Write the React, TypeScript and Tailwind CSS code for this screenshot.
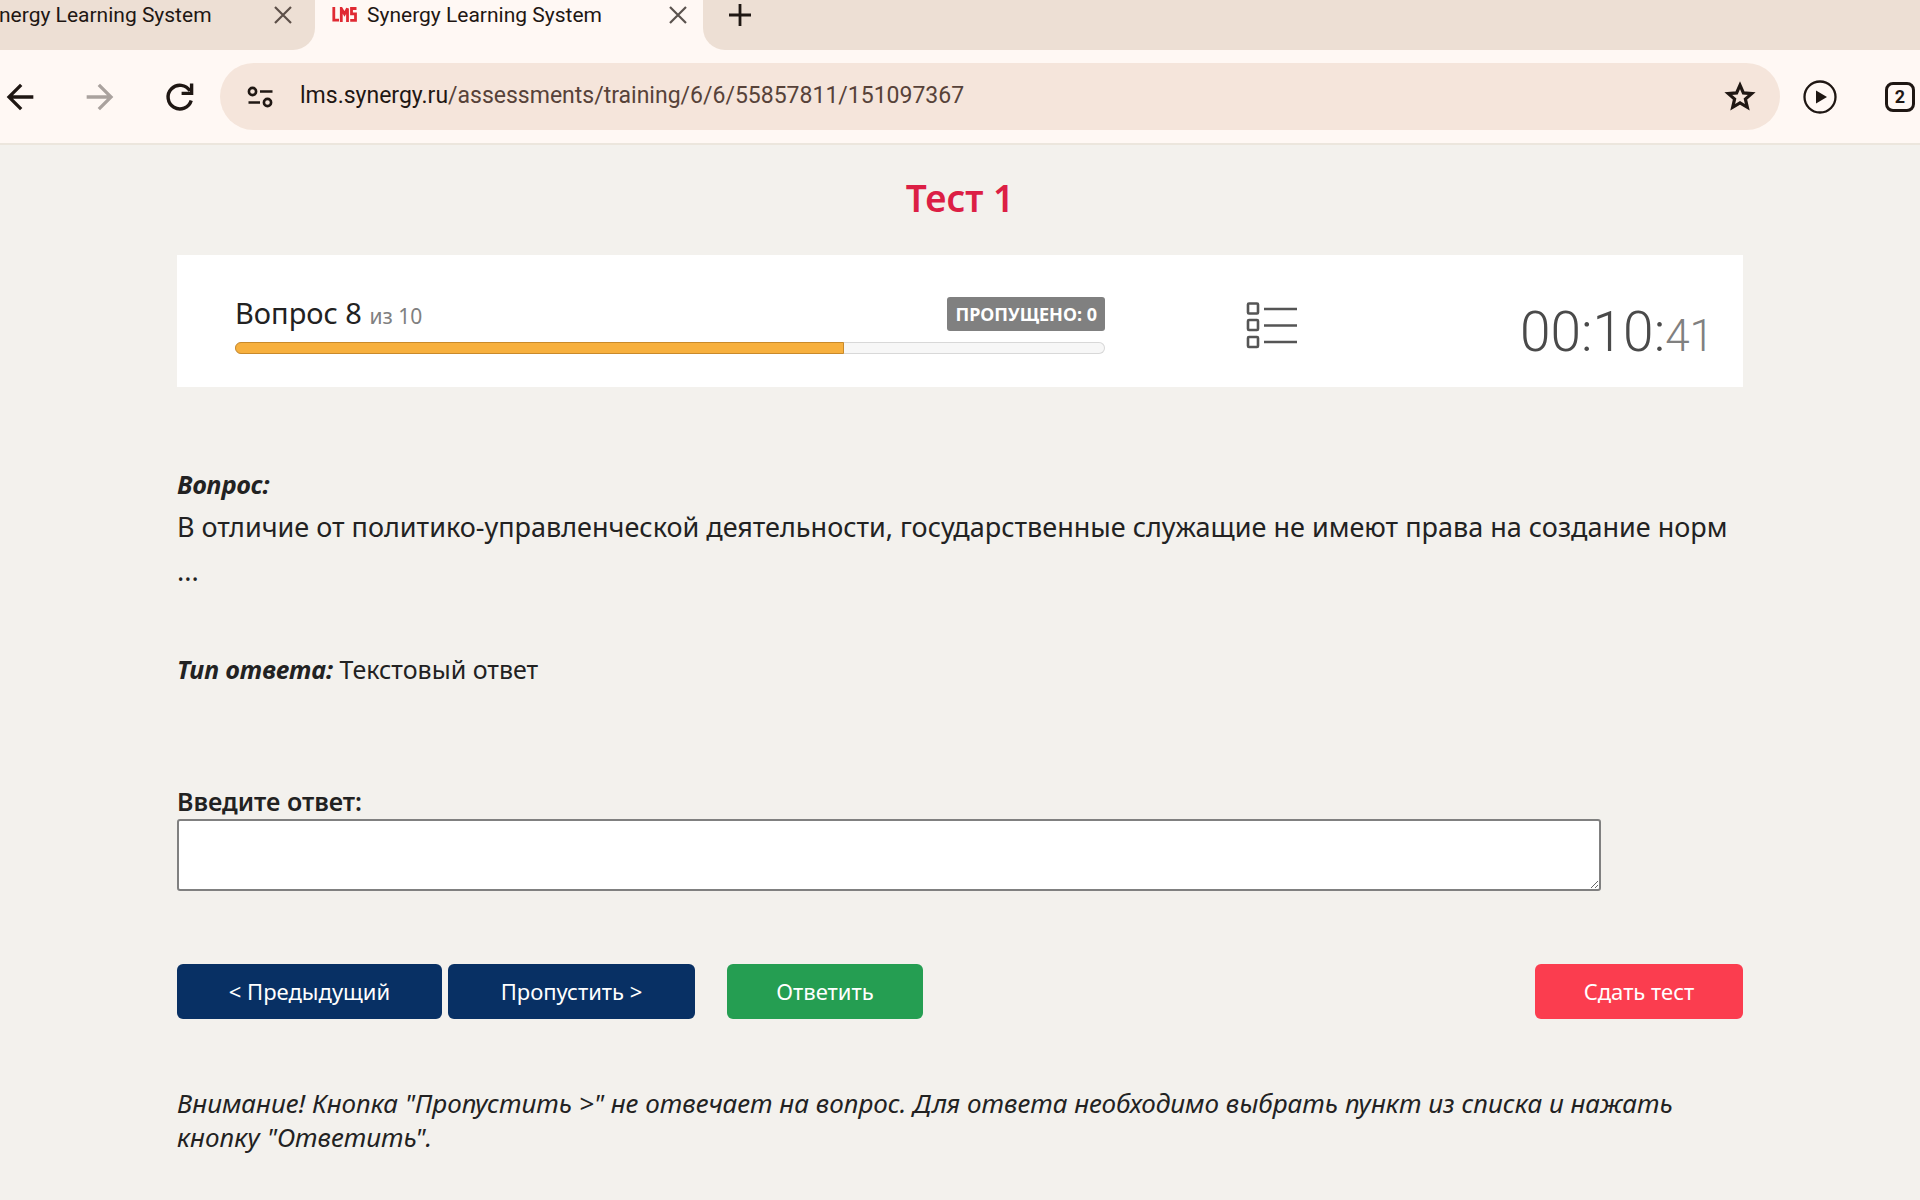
import type { ReactNode } from 'react'

const QUESTION_NUMBER = 8
const QUESTION_COUNT = 10
const ANSWERED = 7

function BackIcon() {
  return (
    <svg viewBox="0 0 24 24" className="size-10" fill="currentColor" aria-hidden="true">
      <path d="M20 11H7.83l5.59-5.59L12 4l-8 8 8 8 1.41-1.41L7.83 13H20z" />
    </svg>
  )
}

function ForwardIcon() {
  return (
    <svg viewBox="0 0 24 24" className="size-10" fill="currentColor" aria-hidden="true">
      <path d="M4 11h12.17l-5.59-5.59L12 4l8 8-8 8-1.41-1.41L16.17 13H4z" />
    </svg>
  )
}

function ReloadIcon() {
  return (
    <svg viewBox="0 0 40 40" className="size-10" fill="none" stroke="currentColor" strokeWidth="3.4" aria-hidden="true">
      <path d="M31.2 23.4A11.8 11.8 0 1 1 30 14" />
      <path d="M31.6 6.4V16.4H21.6" />
    </svg>
  )
}

function SiteSettingsIcon() {
  return (
    <svg viewBox="0 0 28 24" className="h-6 w-7" fill="none" stroke="currentColor" strokeWidth="2.6" aria-hidden="true">
      <circle cx="6.5" cy="6.5" r="3.6" />
      <path d="M14 6.5h12.5M2.5 17.5H14" />
      <circle cx="21.5" cy="17.5" r="3.6" />
    </svg>
  )
}

function StarIcon() {
  return (
    <svg viewBox="0 0 36 36" className="size-9" fill="none" stroke="currentColor" strokeWidth="3.2" aria-hidden="true">
      <path d="M18 6.2l3.4 7.7 8.3.7-6.3 5.5 1.9 8.2-7.3-4.4-7.3 4.4 1.9-8.2-6.3-5.5 8.3-.7z" />
    </svg>
  )
}

function PlayIcon() {
  return (
    <svg viewBox="0 0 36 36" className="size-9" aria-hidden="true">
      <circle cx="18" cy="18" r="15.5" fill="none" stroke="currentColor" strokeWidth="2.3" />
      <path d="M14 11.5L25 18L14 24.5z" fill="currentColor" />
    </svg>
  )
}

function CloseIcon() {
  return (
    <svg viewBox="0 0 18 18" className="size-[18px]" fill="none" stroke="currentColor" strokeWidth="2.2" aria-hidden="true">
      <path d="M1 1l16 16M17 1L1 17" />
    </svg>
  )
}

function PlusIcon() {
  return (
    <svg viewBox="0 0 24 24" className="size-6" fill="none" stroke="currentColor" strokeWidth="2.8" aria-hidden="true">
      <path d="M12 1v22M1 12h22" />
    </svg>
  )
}

// Pixel-style favicon
function LmsLogo() {
  return (
    <svg viewBox="0 0 25 15" className="h-[15px] w-[25px]" fill="none" stroke="#e02a33" strokeWidth="2.8" aria-hidden="true">
      <path d="M1.8 0v13.2H7M9.3 15V1.5L12.5 7l3-5.5V15M24.5 1.5h-5v5.3h4v6.5h-5.3" />
    </svg>
  )
}

function ListIcon() {
  return (
    <svg viewBox="0 0 52 48" className="h-12 w-[52px]" fill="none" stroke="#555" strokeWidth="2.6" aria-hidden="true">
      <rect x="2" y="2.5" width="10" height="10" rx="1" />
      <rect x="2" y="19" width="10" height="10" rx="1" />
      <rect x="2" y="36" width="10" height="10" rx="1" />
      <path d="M18 8h33M18 24.5h33M18 41h33" />
    </svg>
  )
}

function ActionButton({ className, children }: { className: string; children: ReactNode }) {
  return (
    <button type="button" className={`h-[55px] rounded-md text-[22px] text-white ${className}`}>
      {children}
    </button>
  )
}

function BrowserBar() {
  return (
    <header className="bg-[#fff8f4] font-['Roboto',sans-serif] text-[#1f1713]">
      <div className="flex h-[50px] text-[21px] leading-[30px]">
        <div className="flex w-[315px] shrink-0 items-start justify-between rounded-br-[22px] bg-[#eddfd4] pr-[23px]">
          {/* start of the title is scrolled out of view */}
          <span className="-ml-px whitespace-nowrap">nergy Learning System</span>
          <button type="button" aria-label="Закрыть вкладку" className="flex h-[30px] items-center text-[#5d4f48]">
            <CloseIcon />
          </button>
        </div>
        <div className="flex w-[388px] shrink-0 items-start pr-4 pl-[17px]">
          <span className="flex h-[29px] items-center">
            <LmsLogo />
          </span>
          <span className="ml-[10px] whitespace-nowrap">Synergy Learning System</span>
          <button type="button" aria-label="Закрыть вкладку" className="ml-auto flex h-[30px] items-center text-[#5a524e]">
            <CloseIcon />
          </button>
        </div>
        <div className="flex flex-1 items-start rounded-bl-[22px] bg-[#eddfd4] pl-[25px]">
          <button type="button" aria-label="Новая вкладка" className="flex h-[30px] items-center">
            <PlusIcon />
          </button>
        </div>
      </div>

      <div className="flex h-[95px] items-center border-b-2 border-[#ece6dd]">
        <button type="button" aria-label="Назад">
          <BackIcon />
        </button>
        <button type="button" aria-label="Вперёд" className="ml-10 text-[#aaa29e]">
          <ForwardIcon />
        </button>
        <button type="button" aria-label="Обновить" className="ml-10">
          <ReloadIcon />
        </button>
        <div className="ml-5 flex h-[67px] flex-1 items-center rounded-full bg-[#f5e5db] pr-[22px] pl-[26px]">
          <SiteSettingsIcon />
          <p className="ml-[26px] flex-1 text-[23px] text-[#574239]">
            <span className="text-[#1f1713]">lms.synergy.ru</span>/assessments/training/6/6/55857811/151097367
          </p>
          <button type="button" aria-label="Добавить в закладки">
            <StarIcon />
          </button>
        </div>
        <button type="button" aria-label="Воспроизвести" className="ml-[22px]">
          <PlayIcon />
        </button>
        <button
          type="button"
          className="mr-[5px] ml-[47px] size-[30px] rounded-lg border-3 border-[#1f1713] text-[18px] leading-6 font-bold"
        >
          2
        </button>
      </div>
    </header>
  )
}

function StatusCard() {
  return (
    <section className="mt-9 flex h-[132px] bg-white pr-[29px] pl-[58px]">
      <div className="w-[870px] pt-10">
        <div className="flex h-[38px] items-center justify-between">
          <p className="text-[29px] leading-[38px]">
            Вопрос {QUESTION_NUMBER} <span className="text-[21px] text-[#808080]">из {QUESTION_COUNT}</span>
          </p>
          <span className="h-[34px] rounded-[3px] bg-[#808080] px-2 text-[18px] leading-[34px] font-bold whitespace-nowrap text-white">
            ПРОПУЩЕНО: 0
          </span>
        </div>
        <div className="mt-[9px] h-3 rounded-full bg-[#f7f7f7] inset-ring inset-ring-[#d8d8d8]">
          <div
            className="h-3 rounded-l-full border border-[#c98a2b] bg-[#f7b03e]"
            style={{ width: `${(ANSWERED / QUESTION_COUNT) * 100}%` }}
          />
        </div>
      </div>
      <button type="button" aria-label="Список вопросов" className="ml-[141px] pt-2">
        <ListIcon />
      </button>
      <p className="ml-auto self-center pt-[22px] font-['Roboto',sans-serif] text-[55px] leading-none font-light text-[#4a4a4a]">
        00:10:<span className="text-[44px] text-[#808080]">41</span>
      </p>
    </section>
  )
}

export default function App() {
  return (
    <div className="min-h-screen bg-[#f3f1ed] font-['Noto_Sans',sans-serif] text-[#222]">
      <BrowserBar />
      <main className="mx-[177px] pt-[31px] text-[25px]">
        <h1 className="text-center text-[37px] leading-[43px] font-semibold text-[#dc1f45]">Тест 1</h1>

        <StatusCard />

        <section className="mt-[77px]">
          <h2 className="leading-[41px] font-bold italic">Вопрос:</h2>
          <p className="text-[27px] leading-[44px]">
            В отличие от политико-управленческой деятельности, государственные служащие не имеют права на создание норм
            ...
          </p>
          <p className="mt-[55px] leading-[43px]">
            <b className="italic">Тип ответа:</b> Текстовый ответ
          </p>
        </section>

        <form className="mt-[92px]">
          <label htmlFor="answer" className="block leading-9 font-semibold">
            Введите ответ:
          </label>
          <textarea
            id="answer"
            className="block h-[72px] w-10/11 rounded-[3px] border-2 border-[#808080] bg-white px-2"
          />
          <div className="mt-[73px] flex">
            <ActionButton className="w-[265px] bg-[#083064]">&lt; Предыдущий</ActionButton>
            <ActionButton className="ml-[6px] w-[247px] bg-[#083064]">Пропустить &gt;</ActionButton>
            <ActionButton className="ml-8 w-[196px] bg-[#259e52]">Ответить</ActionButton>
            <ActionButton className="ml-auto w-[208px] bg-[#fb3d4f]">Сдать тест</ActionButton>
          </div>
        </form>

        <p className="mt-[67px] text-[26px] leading-[34px] italic">
          Внимание! Кнопка "Пропустить &gt;" не отвечает на вопрос. Для ответа необходимо выбрать пункт из списка и нажать
          кнопку "Ответить".
        </p>
      </main>
    </div>
  )
}
